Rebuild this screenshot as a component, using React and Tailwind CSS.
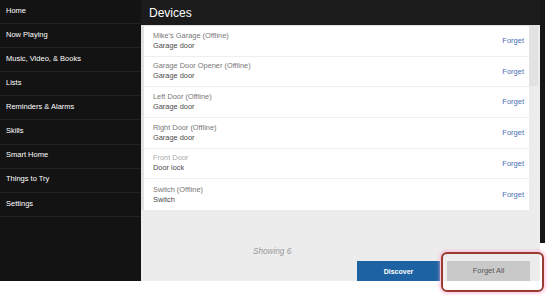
import React from 'react';

const navItems = [
  'Home',
  'Now Playing',
  'Music, Video, & Books',
  'Lists',
  'Reminders & Alarms',
  'Skills',
  'Smart Home',
  'Things to Try',
  'Settings',
];

const devices = [
  { name: 'Mike\u2019s Garage (Offline)', type: 'Garage door' },
  { name: 'Garage Door Opener (Offline)', type: 'Garage door' },
  { name: 'Left Door (Offline)', type: 'Garage door' },
  { name: 'Right Door (Offline)', type: 'Garage door' },
  { name: 'Front Door', type: 'Door lock', faded: true },
  { name: 'Switch (Offline)', type: 'Switch' },
];

export default function App() {
  return (
    <div className="relative w-[550px] h-[297px] bg-white flex items-start font-['Liberation_Sans',Arial,sans-serif]">
      {/* Sidebar */}
      <nav className="w-[141px] h-[281px] bg-[#131313] flex flex-col">
        {navItems.map((item) => (
          <div
            key={item}
            className="h-[24.1px] flex items-center pb-[2px] pl-[6px] border-b border-[#222] text-white text-[7.5px] leading-none shrink-0"
          >
            {item}
          </div>
        ))}
      </nav>

      {/* Main */}
      <main className="w-[399px] h-[281px] flex flex-col bg-[#ececec]">
        <header className="h-[25px] bg-[#1b1b1b] flex items-center pl-[8px] shrink-0">
          <h1 className="text-white text-[12px] leading-none">Devices</h1>
        </header>

        <div className="flex pl-[3px] pt-[1px] bg-[#e2e2e2] shrink-0">
          <div className="w-[385px] bg-white">
            {devices.map((d, i) => (
              <div
                key={i}
                className="h-[30.67px] flex items-center justify-between pl-[9px] pr-[5px] border-b border-[#eeeeee] last:border-b-0"
              >
                <div className="flex flex-col text-[7.4px] leading-[10px]">
                  <span className={d.faded ? 'text-[#aaaaaa]' : 'text-[#777777]'}>{d.name}</span>
                  <span className="text-[#4a4a4a]">{d.type}</span>
                </div>
                <button className="text-[#4a6fb3] text-[7.5px] leading-none">Forget</button>
              </div>
            ))}
          </div>
          <div className="w-[11px] bg-[#ececec] flex flex-col">
            <div className="w-[9px] h-[60px] bg-[#e2e2e2]" />
          </div>
        </div>

        <div className="flex-1 bg-[#ececec] flex flex-col leading-none">
          <div className="pt-[37px] pl-[112px] italic text-[#9a9a9a] text-[8.2px] leading-[10px]">
            Showing 6
          </div>
          <div className="flex gap-[7px] pl-[216px] mt-auto">
            <button className="w-[83px] h-[20px] bg-[#1d63a4] text-white font-bold text-[7px]">Discover</button>
            <button className="w-[83px] h-[20px] bg-[#c9c9c9] text-[#555555] text-[7.5px]">Forget All</button>
          </div>
        </div>
      </main>

      {/* Right edge */}
      <div className="w-[5px] h-[243px] bg-[#161616]" />

      {/* Highlight */}
      <div className="absolute left-[441px] top-[252px] w-[103px] h-[40px] border-2 border-[#9a3b31] rounded-[6px] shadow-[0_0_3px_2px_rgba(255,170,210,0.55)]" />
    </div>
  );
}
